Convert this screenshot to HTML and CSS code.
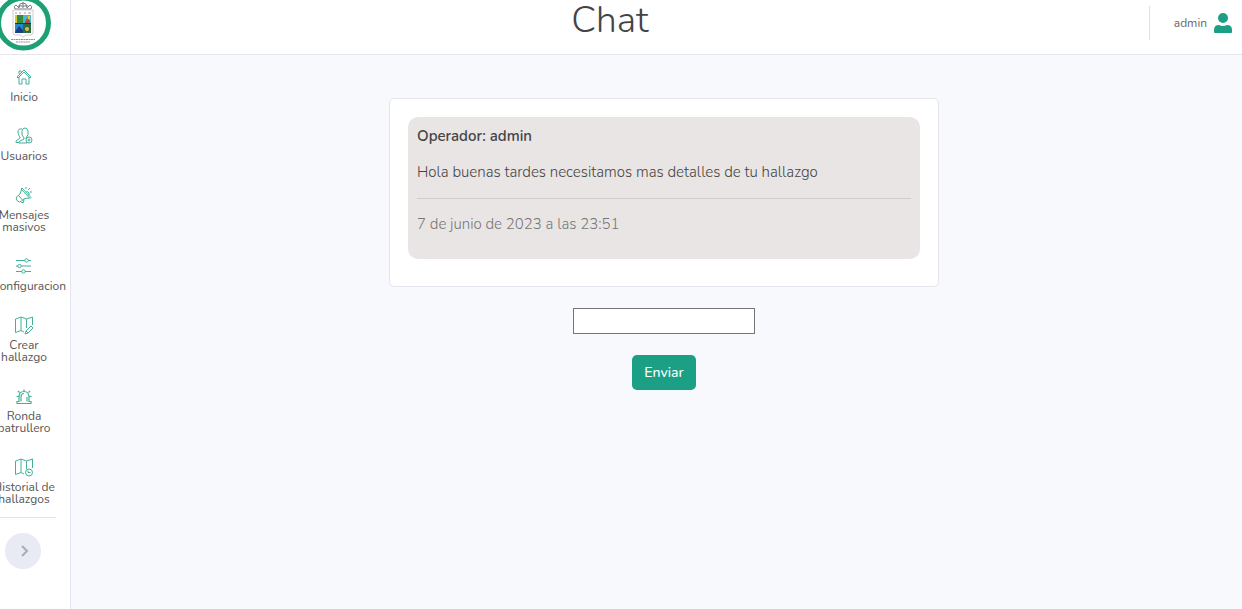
FILE: index.html
```html
<!DOCTYPE html>
<html lang="es">
<head>
<meta charset="utf-8">
<meta name="viewport" content="width=device-width, initial-scale=1">
<title>Chat</title>
<link rel="stylesheet" href="styles.css">
</head>
<body>
<div class="app">
  <aside class="sidebar">
    <a class="brand" href="#" aria-label="Portada">
      <svg class="brand-logo" viewBox="0 0 56 56" aria-hidden="true">
        <circle cx="28.500" cy="28" r="25" fill="#fff" stroke="#1ca075" stroke-width="5"/>
        <path d="M20 14q-2-3 1-4l3 3 1-4 3-1 3 1 1 4 3-3q3 1 1 4zM23 11h10M28 7v6" fill="none" stroke="#777b88" stroke-width="1"/>
        <path d="M18 15h20v23q0 2-3 2h-4l-3 2-3-2h-4q-3 0-3-2z" fill="#fff" stroke="#c3c0ba" stroke-width=".8"/>
        <path d="M20 18h2M24 18h2M29 18h2M33 18h3" stroke="#9a9bab" stroke-width="1.2"/>
        <path d="M20 20h8v9h-8z" fill="#d3c63a"/>
        <path d="M22 20h6v8h-6z" fill="#2f8f3f"/>
        <path d="M28 20h8v9h-8z" fill="#4cb4d8"/>
        <path d="M30 27l2-4 3 3v2h-5z" fill="#a8503c"/>
        <path d="M33 21h2v3h-2z" fill="#e5cc24"/>
        <path d="M20 29h8v9h-8z" fill="#2a86c8"/>
        <path d="M20 37l4-6 4 4v3h-8z" fill="#173f86"/>
        <path d="M28 29h8v9h-8z" fill="#2c6a45"/>
        <circle cx="32" cy="34" r="2" fill="#d2c53a"/>
        <path d="M20 28.500h16" stroke="#16325c" stroke-width="1"/>
        <path d="M16 44.500h24M21 47h14" stroke="#8f939b" stroke-width="1" stroke-dasharray="2 .5"/>
      </svg>
    </a>
    <nav class="menu" aria-label="Principal">
      <a class="menu-item" href="#">
        <svg class="icon" viewBox="0 0 20 20" aria-hidden="true"><path d="M3 10l7-7 7 7-1 1-6-6-6 6zM5 10v7h3v-5h4v5h3v-7M5 7V4h2v1.500"/></svg>
        <span>Inicio</span>
      </a>
      <a class="menu-item" href="#">
        <svg class="icon" viewBox="0 0 20 20" aria-hidden="true"><path d="M12 13v-1q3-3 2-7-.5-3-3-3T8 5q-1 4 2 7v1l-5 2.500V17h8M8 3Q4 2 4 6q0 3 2 5v1l-4 3v1.500h3"/><circle cx="15" cy="14" r="3"/><path d="M15 12.500v3M13.500 14h3"/></svg>
        <span>Usuarios</span>
      </a>
      <a class="menu-item" href="#">
        <svg class="icon" viewBox="0 0 20 20" aria-hidden="true"><path d="M8 3l9 9.500-1 1L7 4zM7.500 4.500L6 9l-3.500 3q-1 2 1 4t4 0l3-2.500 5-.5M4.500 10.500l4.500 5M6 16l1.500 1.500h2L10 14M12 7q2-1 3 1t-1 2M12 4V2M14 5l2-2M16 7h2"/></svg>
        <span>Mensajes masivos</span>
      </a>
      <a class="menu-item" href="#">
        <svg class="icon" viewBox="0 0 20 20" aria-hidden="true"><path d="M2 4.500h9M14 4.500h3M2 10h2M7 10h10M2 15.500h6M11 15.500h6"/><circle cx="12.500" cy="4.500" r="1.700"/><circle cx="5.500" cy="10" r="1.700"/><circle cx="9.500" cy="15.500" r="1.700"/></svg>
        <span>Configuracion</span>
      </a>
      <a class="menu-item" href="#">
        <svg class="icon" viewBox="0 0 20 20" aria-hidden="true"><path d="M10 17l-3-1.500-5.500 2V4L7 2l5.500 2L18.500 2v8M7 2v13.500M12.500 4v9M11 19l1-3 5-5 2 2-5 5zM12 16l2 2"/></svg>
        <span>Crear hallazgo</span>
      </a>
      <a class="menu-item" href="#">
        <svg class="icon" viewBox="0 0 20 20" aria-hidden="true"><path d="M3 17.500v-2h2v-4q0-6 5-6t5 6v4h2v2zM7 15.500v-4q0-4 3-4M13 11v4.500M10 5.500v-2M5.500 6.500L4 5M14.500 6.500L16 5M4.500 10.500h-2M15.500 10.500h2" stroke-width="1.200"/></svg>
        <span>Ronda patrullero</span>
      </a>
      <a class="menu-item" href="#">
        <svg class="icon" viewBox="0 0 20 20" aria-hidden="true"><path d="M10 17l-3-1.500-5.500 2V4L7 2l5.500 2L18.500 2v9M7 2v13.500M12.500 4v8"/><circle cx="15" cy="15.500" r="3.500"/><path d="M14 13.500v2h2.500"/></svg>
        <span>Historial de hallazgos</span>
      </a>
    </nav>
    <hr class="sidebar-divider">
    <button class="toggle" type="button" aria-label="Contraer menú">
      <svg class="toggle-icon" viewBox="0 0 12 12" aria-hidden="true"><path d="M5 1l5 5-5 5"/></svg>
    </button>
  </aside>
  <div class="page">
    <header class="topbar">
      <h1 class="title">Chat</h1>
      <a class="user" href="#">
        <span>admin</span>
        <svg class="user-icon" viewBox="0 0 18 20" aria-hidden="true"><circle cx="9" cy="5" r="5"/><path d="M0 19v-2q0-5 5-5 4 2 8 0 5 0 5 5v2q0 1-1 1H1q-1 0-1-1z"/></svg>
      </a>
    </header>
    <main class="content">
      <section class="card" aria-label="Mensajes">
        <article class="message">
          <p class="author">Operador: admin</p>
          <p class="text">Hola buenas tardes necesitamos mas detalles de tu hallazgo</p>
          <hr class="divider">
          <p class="date">7 de junio de 2023 a las 23:51</p>
        </article>
      </section>
      <form class="composer">
        <input class="field" type="text" aria-label="Mensaje">
        <button class="send" type="button">Enviar</button>
      </form>
    </main>
  </div>
</div>
</body>
</html>
```
FILE: styles.css
```css
* { box-sizing: border-box; }
body {
  margin: 0;
  background: #f8f9fd;
  color: #444;
  font-family: Nunito, Lato, sans-serif;
  font-size: 15px;
  font-weight: 300;
  line-height: 24px;
}
p, h1 { margin: 0; }
a { color: inherit; text-decoration: none; }
.app { display: flex; min-height: 100vh; }
.sidebar {
  flex: 0 0 71px;
  overflow: hidden;
  background: #fff;
  border-right: 1px solid #e3e4ee;
}
.brand {
  display: block;
  height: 55px;
  overflow: hidden;
  border-bottom: 1px solid #e6e7ee;
}
.brand-logo { display: block; width: 56px; height: 56px; margin: -5px 0 0 -5px; }
.menu {
  display: flex;
  flex-direction: column;
  gap: 23px;
  width: 64px;
  margin: 12px 0 0 -8px;
}
.menu-item {
  display: flex;
  flex-direction: column;
  gap: 4px;
  color: #555;
  font-size: 12px;
  font-weight: 400;
  line-height: 12px;
  text-align: center;
}
.icon {
  width: 20px;
  height: 20px;
  align-self: center;
  fill: none;
  stroke: #45b099;
  stroke-width: 1;
}
.sidebar-divider { width: 56px; margin: 12px 0 15px; border: 0; border-top: 1px solid #e3e4ea; }
.toggle {
  display: grid;
  place-items: center;
  width: 36px;
  height: 36px;
  margin-left: 5px;
  padding: 0;
  border: 0;
  border-radius: 50%;
  background: #e8ebf3;
}
.toggle-icon { width: 12px; height: 12px; fill: none; stroke: #a8abbb; stroke-width: 2; }
.page { flex: 1; min-width: 0; }
.topbar {
  display: flex;
  align-items: center;
  height: 55px;
  padding-right: 10px;
  background: #fff;
  border-bottom: 1px solid #e6e7ee;
}
.title {
  flex: 1;
  padding-bottom: 15px;
  font-size: 37px;
  font-weight: 300;
  line-height: 38px;
  text-align: center;
}
.user {
  display: flex;
  align-items: center;
  gap: 7px;
  height: 34px;
  margin-bottom: 9px;
  padding-left: 24px;
  border-left: 1px solid #dedfe4;
  color: #666;
  font-size: 12px;
  font-weight: 400;
}
.user-icon { width: 18px; height: 20px; overflow: visible; fill: #1ca085; }
.content {
  display: flex;
  flex-direction: column;
  align-items: center;
  gap: 21px;
  padding: 43px 0 43px 15px;
}
.card {
  width: 100%;
  max-width: 550px;
  padding: 18px 18px 27px;
  background: #fff;
  border: 1px solid #e3e4ee;
  border-radius: 5px;
}
.message { padding: 7px 9px 23px; background: #e9e5e4; border-radius: 10px; }
.author { font-weight: 600; }
.text { margin-top: 12px; }
.divider { margin: 14px 0 13px; border: 0; border-top: 1px solid #cfcccb; }
.date { color: #777; }
.composer { display: flex; flex-direction: column; align-items: center; gap: 21px; }
.field {
  width: 182px;
  height: 26px;
  padding: 1px 2px;
  background: #fff;
  border: 1px solid #767676;
  font: inherit;
}
.send {
  height: 35px;
  padding: 0 12px;
  border: 0;
  border-radius: 5px;
  background: #1ca085;
  color: #fff;
  font: inherit;
  font-size: 14px;
  font-weight: 500;
}
```
